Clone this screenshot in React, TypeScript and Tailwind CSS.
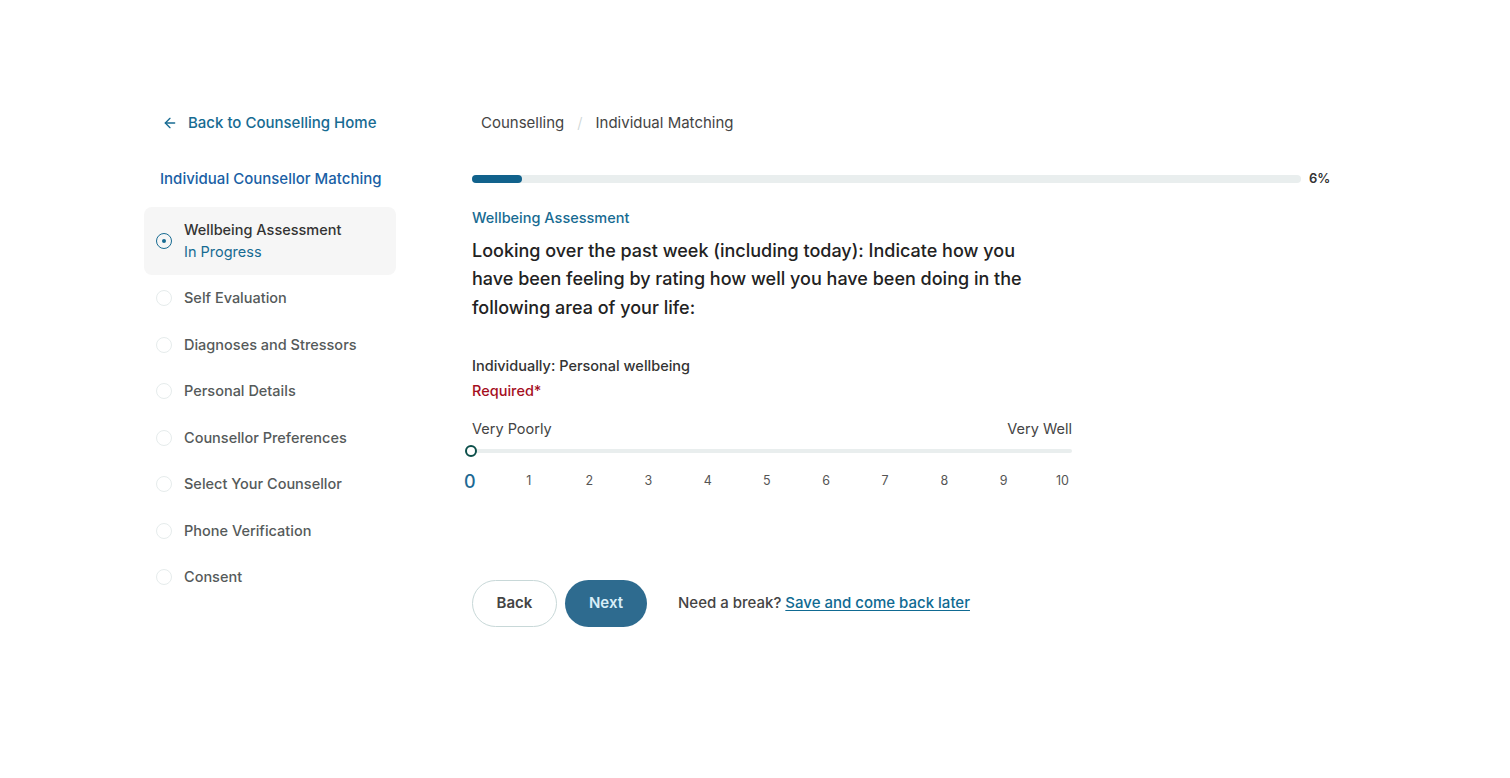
import React from "react";

const steps = [
  "Self Evaluation",
  "Diagnoses and Stressors",
  "Personal Details",
  "Counsellor Preferences",
  "Select Your Counsellor",
  "Phone Verification",
  "Consent",
];

export default function App() {
  const nums = [0, 1, 2, 3, 4, 5, 6, 7, 8, 9, 10];
  return (
    <div
      className="min-h-[778px] w-full bg-white text-[#333]"
      style={{ fontFamily: "Inter, 'Open Sans', sans-serif" }}
    >
      <div className="flex pt-[111px] pl-[144px]">
        {/* Sidebar */}
        <aside className="w-[252px] shrink-0">
          <a className="flex items-center gap-[10px] pl-[18px] text-[15px] font-medium text-[#176b92] leading-[24px]">
            <svg width="16" height="16" viewBox="0 0 24 24" fill="none" stroke="currentColor" strokeWidth="2" strokeLinecap="round" strokeLinejoin="round">
              <path d="M19 12H5" />
              <path d="M12 19l-7-7 7-7" />
            </svg>
            Back to Counselling Home
          </a>
          <div className="mt-[32px] pl-[16px] text-[15px] font-medium leading-[24px] text-[#1a5fa5]">
            Individual Counsellor Matching
          </div>
          <div className="mt-[16px] flex h-[68px] items-center gap-[12px] rounded-lg bg-[#f6f6f6] pl-[12px]">
            <span className="flex h-[16px] w-[16px] items-center justify-center rounded-full border-[1.5px] border-[#176b92]">
              <span className="h-[4px] w-[4px] rounded-full bg-[#176b92]" />
            </span>
            <div className="leading-[22px]">
              <div className="text-[14.5px] font-medium text-[#333]">Wellbeing Assessment</div>
              <div className="text-[14.5px] text-[#176b92]">In Progress</div>
            </div>
          </div>
          <div className="mt-[12px] flex flex-col gap-[24.5px]">
            {steps.map((s) => (
              <div key={s} className="flex h-[22px] items-center gap-[12px] pl-[12px]">
                <span className="h-[16px] w-[16px] rounded-full border border-[#e6ecec]" />
                <span className="text-[14.5px] font-medium text-[#555a5a]">{s}</span>
              </div>
            ))}
          </div>
        </aside>

        {/* Main */}
        <main className="ml-[76px] w-[860px]">
          <div className="flex items-center pl-[9px] text-[15px] text-[#444] leading-[24px]">
            <span>Counselling</span>
            <span className="mx-[13px] text-[#ccd4d4] font-light">/</span>
            <span>Individual Matching</span>
          </div>
          <div className="mt-[34px] flex items-center gap-[8px]">
            <div className="h-[8px] w-[829px] rounded-full bg-[#e9eeee]">
              <div className="h-[8px] w-[50px] rounded-full bg-[#11628c]" />
            </div>
            <span className="text-[13px] font-semibold text-[#333]">6%</span>
          </div>
          <div className="mt-[19px] text-[14.5px] font-medium text-[#176b92] leading-[20px]">
            Wellbeing Assessment
          </div>
          <h1 className="mt-[9px] w-[575px] text-[18px] font-medium leading-[28.5px] text-[#222]">
            Looking over the past week (including today): Indicate how you have been feeling by rating how well you have been doing in the following area of your life:
          </h1>
          <div className="mt-[33px] text-[14.5px] font-medium leading-[22px] text-[#333]">
            Individually: Personal wellbeing
          </div>
          <div className="mt-[3px] text-[14.5px] font-medium leading-[22px] text-[#a50e1e]">
            Required*
          </div>
          <div className="mt-[16px] w-[600px]">
            <div className="flex justify-between text-[14.5px] leading-[22px] text-[#444]">
              <span>Very Poorly</span>
              <span>Very Well</span>
            </div>
            <div className="relative mt-[6px] h-[10px]">
              <div className="absolute left-0 right-0 top-[3px] h-[4px] rounded-full bg-[#e9eeee]" />
              <div className="absolute left-[-7px] top-[-1px] h-[12px] w-[12px] rounded-full border-2 border-[#0c4f4a] bg-white" />
            </div>
            <div className="relative mt-[14px] h-[24px] text-[12.5px] text-[#555]">
              {nums.map((n) => (
                <span
                  key={n}
                  className={n === 0 ? "absolute top-[0px] text-[18px] font-medium text-[#1e6a94] leading-[24px]" : "absolute top-[1px] leading-[20px]"}
                  style={{ left: n === 0 ? -8 : n * 59.2 - 5 - (n === 10 ? 3 : 0) }}
                >
                  {n}
                </span>
              ))}
            </div>
          </div>
          <div className="mt-[86px] flex items-center">
            <button className="h-[47px] w-[85px] rounded-full border border-[#c8d8d8] bg-white text-[15px] font-semibold text-[#444]">
              Back
            </button>
            <button className="ml-[8px] h-[47px] w-[82px] rounded-full bg-[#2e6b8f] text-[15px] font-semibold text-[#d8eef8]">
              Next
            </button>
            <span className="ml-[31px] text-[15px] font-medium text-[#444]">
              Need a break?{" "}
              <a className="text-[#0f6a92] underline underline-offset-2">Save and come back later</a>
            </span>
          </div>
        </main>
      </div>
    </div>
  );
}
